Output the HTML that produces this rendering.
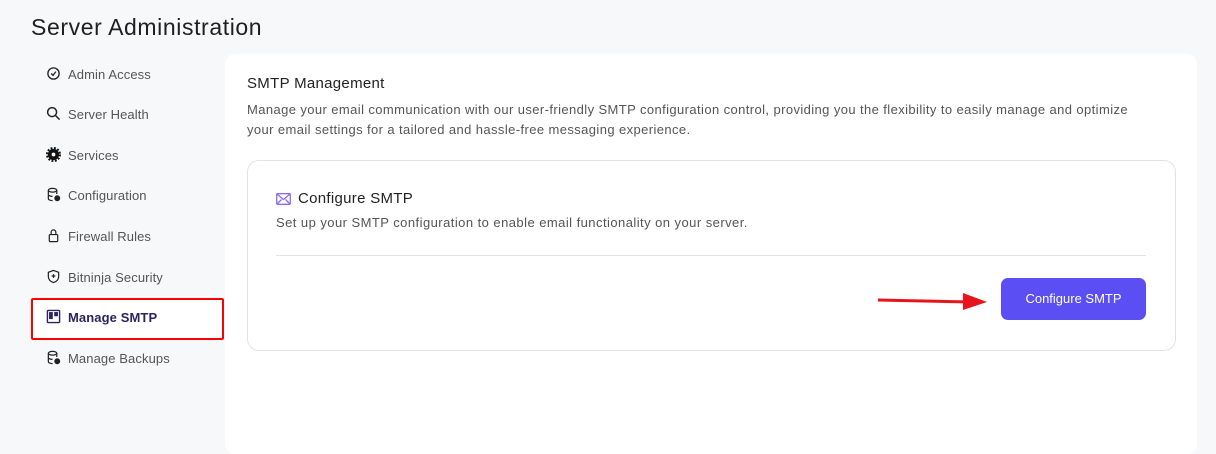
<!DOCTYPE html>
<html><head><style>
body{margin:0;width:1216px;height:443px;background:#f7f8fa;font-family:"Liberation Sans",sans-serif;position:relative;overflow:hidden;color:#333}
.t{position:absolute;left:31px;top:14px;font-size:23px;color:#1f1f1f;letter-spacing:0.6px}
.nav{position:absolute;left:46px;font-size:13px;color:#555;letter-spacing:0.1px}
.nav svg{position:absolute;left:0;top:-1px}
.nav span{position:absolute;left:22px;white-space:nowrap}
.panel{position:absolute;left:225px;top:54px;width:972px;height:400px;background:#fff;border-radius:10px}
.card{position:absolute;left:247px;top:160px;width:927px;height:189px;background:#fff;border:1px solid #e3e3e6;border-radius:12px}
</style></head><body>
<div class="t">Server Administration</div>
<div style="position:absolute;left:31px;top:298px;width:189px;height:38px;background:#fff;border:2px solid #f00;border-radius:2px"></div>
<div class="nav" style="top:67px"><svg width="15" height="15" viewBox="0 0 16 16" fill="none" stroke="#222" stroke-width="1.4"><circle cx="8" cy="8" r="6"/><path d="M5.5 8l2 2 3-4"/></svg><span>Admin Access</span></div>
<div class="nav" style="top:107px"><svg width="15" height="15" viewBox="0 0 16 16" fill="none" stroke="#222" stroke-width="1.6"><circle cx="6.5" cy="6.5" r="4.8"/><path d="M10 10l4.5 4.5"/></svg><span>Server Health</span></div>
<div class="nav" style="top:148px"><svg width="15" height="15" viewBox="0 0 16 16"><circle cx="8" cy="8" r="6" fill="#111"/><circle cx="8" cy="8" r="7" fill="none" stroke="#111" stroke-width="2" stroke-dasharray="2 1.7"/><circle cx="8" cy="8" r="2" fill="#fff"/></svg><span>Services</span></div>
<div class="nav" style="top:188px"><svg width="15" height="15" viewBox="0 0 16 16" fill="none" stroke="#222" stroke-width="1.3"><ellipse cx="7" cy="3.5" rx="4.5" ry="2"/><path d="M2.5 3.5v9c0 1 2 2 4.5 2M11.5 3.5v4M2.5 8c0 1 2 2 4.5 2"/><circle cx="12" cy="12" r="2.5" fill="#222"/></svg><span>Configuration</span></div>
<div class="nav" style="top:229px"><svg width="15" height="15" viewBox="0 0 16 16" fill="none" stroke="#222" stroke-width="1.3"><rect x="3.5" y="7" width="9" height="7.5" rx="1"/><path d="M5.5 7V4.5a2.5 2.5 0 015 0V7"/></svg><span>Firewall Rules</span></div>
<div class="nav" style="top:270px"><svg width="15" height="15" viewBox="0 0 16 16" fill="none" stroke="#222" stroke-width="1.3"><path d="M8 1.5l5.5 2v4.5c0 3.5-2.5 5.5-5.5 6.5C5 13.5 2.5 11.5 2.5 8V3.5z"/><path d="M8 5.5v4M6 7.5h4"/></svg><span>Bitninja Security</span></div>
<div class="nav" style="top:310px;color:#2a2560;font-weight:bold"><svg width="15" height="15" viewBox="0 0 16 16" fill="none" stroke="#2a2560" stroke-width="1.5"><rect x="1.5" y="1.5" width="13" height="13" rx="1"/><rect x="4" y="4" width="2.5" height="6" fill="#2a2560"/><rect x="9.5" y="4" width="2.5" height="3" fill="#2a2560"/></svg><span>Manage SMTP</span></div>
<div class="nav" style="top:351px"><svg width="15" height="15" viewBox="0 0 16 16" fill="none" stroke="#222" stroke-width="1.3"><ellipse cx="7" cy="3.5" rx="4.5" ry="2"/><path d="M2.5 3.5v9c0 1 2 2 4.5 2M11.5 3.5v4M2.5 8c0 1 2 2 4.5 2"/><circle cx="12" cy="12" r="2.5" fill="#222"/></svg><span>Manage Backups</span></div>
<div class="panel"></div>
<div style="position:absolute;left:247px;top:75px;font-size:15px;color:#222;letter-spacing:0.3px">SMTP Management</div>
<div style="position:absolute;left:247px;top:100px;width:900px;font-size:13px;line-height:20px;color:#555;letter-spacing:0.4px">Manage your email communication with our user-friendly SMTP configuration control, providing you the flexibility to easily manage and optimize your email settings for a tailored and hassle-free messaging experience.</div>
<div class="card"></div>
<svg style="position:absolute;left:276px;top:193px" width="15" height="12" viewBox="0 0 15 12" fill="none" stroke="#8a6cf0" stroke-width="1.3"><rect x=".7" y=".7" width="13.6" height="10.6" rx="1"/><path d="M1 1l6.5 5.5L14 1M1 11l4.5-4.5M14 11L9.5 6.5"/></svg>
<div style="position:absolute;left:298px;top:190px;font-size:15px;color:#222;letter-spacing:0.3px">Configure SMTP</div>
<div style="position:absolute;left:276px;top:215px;font-size:13px;color:#555;letter-spacing:0.45px">Set up your SMTP configuration to enable email functionality on your server.</div>
<div style="position:absolute;left:276px;top:255px;width:870px;height:1px;background:#e3e3e6"></div>
<svg style="position:absolute;left:875px;top:290px" width="120" height="20"><path d="M3 10 L95 12" stroke="#e8141b" stroke-width="3"/><path d="M88 3 L112 12 L88 20z" fill="#e8141b"/></svg>
<div style="position:absolute;left:1001px;top:278px;width:145px;height:42px;background:#5b4ef2;border-radius:7px;color:#fff;font-size:13px;line-height:42px;text-align:center">Configure SMTP</div>
</body></html>
